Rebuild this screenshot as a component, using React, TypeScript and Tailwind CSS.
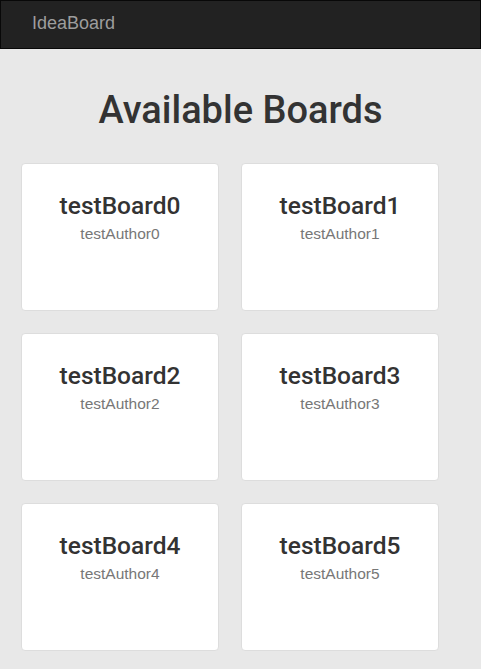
import React from 'react';

const boards = [0, 1, 2, 3, 4, 5].map((i) => ({
	title: `testBoard${i}`,
	author: `testAuthor${i}`,
}));

const headingFont = { fontFamily: 'Roboto, "Liberation Sans", Arial, sans-serif' };

function BoardCard({ title, author }: { title: string; author: string }) {
	return (
		<div className="h-[148px] rounded-[4px] border border-[#dddddd] bg-white pt-[28px] text-center">
			<h3 className="text-[24.5px] font-medium leading-[27px] text-[#333333]" style={headingFont}>
				{title}
			</h3>
			<p className="mt-[5px] text-[15.5px] leading-[20px] text-[#777777]">{author}</p>
		</div>
	);
}

export default function App() {
	return (
		<div
			className="min-h-[669px] bg-[#e8e8e8]"
			style={{ fontFamily: '"Liberation Sans", Arial, sans-serif' }}
		>
			<nav className="h-[49px] border border-[#080808] bg-[#222222] pl-[31px]">
				<span className="block pt-[12px] text-[18px] leading-[20px] text-[#9d9d9d]">IdeaBoard</span>
			</nav>
			<h1
				className="pt-[41px] text-center text-[38px] font-medium leading-[40px] text-[#333333]"
				style={headingFont}
			>
				Available Boards
			</h1>
			<div className="grid grid-cols-[198px_198px] gap-[22px] pl-[21px] pt-[33px]">
				{boards.map((b) => (
					<BoardCard key={b.title} title={b.title} author={b.author} />
				))}
			</div>
		</div>
	);
}
